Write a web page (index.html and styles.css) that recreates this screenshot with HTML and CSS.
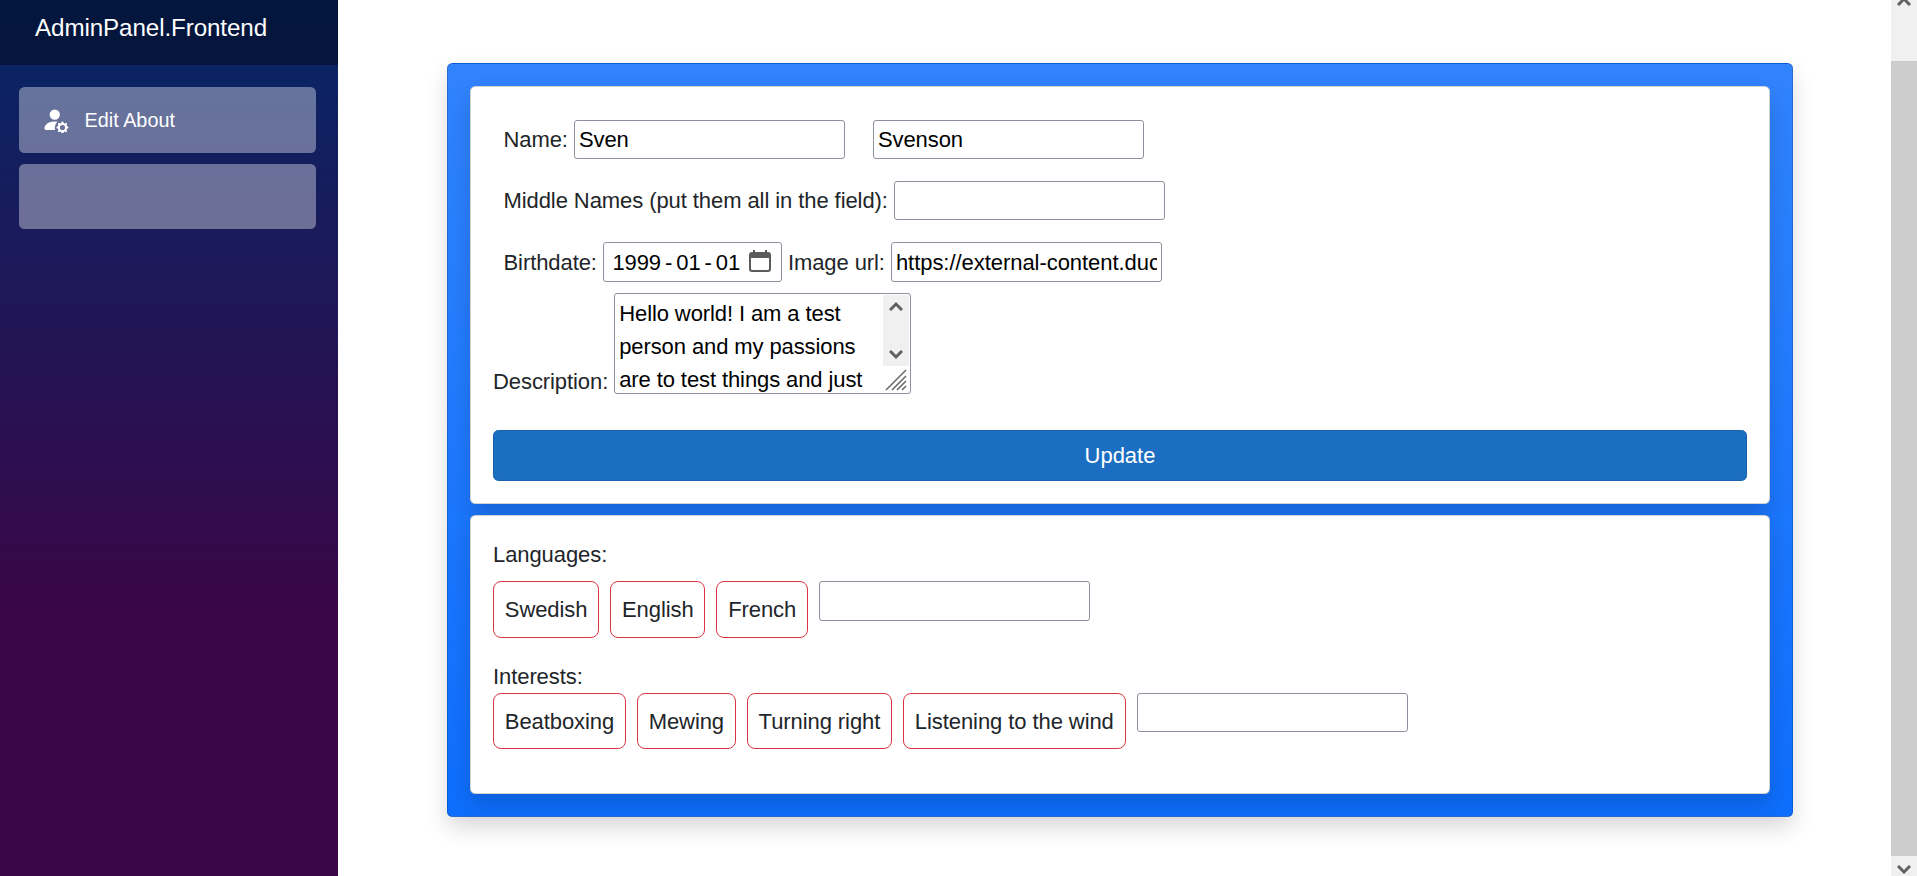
FILE: index.html
```html
<!DOCTYPE html>
<html lang="en">
<head>
<meta charset="utf-8">
<title>AdminPanel.Frontend</title>
<link rel="stylesheet" href="styles.css">
</head>
<body>
<div class="page">
  <aside class="sidebar">
    <header class="brand">AdminPanel.Frontend</header>
    <nav class="nav">
      <a class="nav-item">
        <svg class="nav-icon" viewBox="0 0 16 16" fill="#fff"><path d="M11 5a3 3 0 1 1-6 0 3 3 0 0 1 6 0m-9 8c0 1 1 1 1 1h5.256A4.500 4.500 0 0 1 8 12.500a4.500 4.500 0 0 1 1.544-3.393Q8.844 9.002 8 9c-5 0-6 3-6 4m9.886-3.540c.180-.613 1.048-.613 1.229 0l.043.148a.640.640 0 0 0 .921.382l.136-.074c.561-.306 1.175.308.870.869l-.075.136a.640.640 0 0 0 .382.920l.149.045c.612.180.612 1.048 0 1.229l-.150.043a.640.640 0 0 0-.380.921l.074.136c.305.561-.309 1.175-.870.870l-.136-.075a.640.640 0 0 0-.920.382l-.045.149c-.180.612-1.048.612-1.229 0l-.043-.150a.640.640 0 0 0-.921-.380l-.136.074c-.561.305-1.175-.309-.870-.870l.075-.136a.640.640 0 0 0-.382-.920l-.148-.045c-.613-.180-.613-1.048 0-1.229l.148-.043a.640.640 0 0 0 .382-.921l-.074-.136c-.306-.561.308-1.175.869-.870l.136.075a.640.640 0 0 0 .920-.382zM14 12.500a1.500 1.500 0 1 0-3 0 1.500 1.500 0 0 0 3 0"/></svg>
        <span>Edit About</span>
      </a>
      <a class="nav-item nav-item-empty"></a>
    </nav>
  </aside>
  <main class="content">
    <section class="panel">
      <form class="card form-card">
        <div class="row"><label>Name:</label><input class="field" value="Sven"><input class="field field-last" value="Svenson"></div>
        <div class="row row-middle"><label>Middle Names (put them all in the field):</label><input class="field"></div>
        <div class="row row-birth">
          <label>Birthdate:</label>
          <div class="field field-tall date"><span>1999</span><span>-</span><span>01</span><span>-</span><span>01</span>
            <svg class="calendar" viewBox="0 0 22 22"><path d="M4 0h2v2h10V0h2v2h1a3 3 0 0 1 3 3v14a3 3 0 0 1-3 3H3a3 3 0 0 1-3-3V5a3 3 0 0 1 3-3h1zM2 8v10.500A1.500 1.500 0 0 0 3.500 20h15a1.500 1.500 0 0 0 1.500-1.500V8z" fill="#5b5b5e" fill-rule="evenodd"/></svg>
          </div>
          <label>Image url:</label><input class="field field-tall field-url" value="https://external-content.duckduckgo.com/">
        </div>
        <div class="row row-description">
          <label>Description:</label>
          <div class="textarea">
            <div class="textarea-text">Hello world! I am a test<br>person and my passions<br>are to test things and just</div>
            <div class="textarea-side">
              <div class="mini-scroll">
                <svg class="arrow" viewBox="0 0 14 10"><path d="M1 9L7 3l6 6" /></svg>
                <svg class="arrow" viewBox="0 0 14 10"><path d="M1 1l6 6 6-6" /></svg>
              </div>
              <svg class="grip" viewBox="0 0 22 22"><path d="M1 21L21 1M7 21L21 7M12 21l9-9M17 21l4-4"/></svg>
            </div>
          </div>
        </div>
        <button class="update" type="button">Update</button>
      </form>
      <div class="card tags-card">
        <div class="tag-label">Languages:</div>
        <div class="tags languages"><span class="tag">Swedish</span><span class="tag">English</span><span class="tag">French</span><input class="field field-tall"></div>
        <div class="tag-label interests-label">Interests:</div>
        <div class="tags interests"><span class="tag">Beatboxing</span><span class="tag">Mewing</span><span class="tag">Turning right</span><span class="tag">Listening to the wind</span><input class="field"></div>
      </div>
    </section>
  </main>
  <div class="scrollbar">
    <div class="scroll-top"><svg class="arrow" viewBox="0 0 14 10"><path d="M1 9L7 3l6 6"/></svg></div>
    <div class="thumb"></div>
    <div class="scroll-bottom"><svg class="arrow" viewBox="0 0 14 10"><path d="M1 1l6 6 6-6"/></svg></div>
  </div>
</div>
</body>
</html>
```

FILE: styles.css
```css
* { box-sizing: border-box; }
body {
  margin: 0;
  overflow: hidden;
  background: #fff;
  color: #212529;
  font: 22px/33px "Liberation Sans", Arial, sans-serif;
  letter-spacing: -.08px;
}
.page { display: flex; height: 876px; }
.sidebar {
  width: 338px;
  flex: none;
  background: linear-gradient(180deg, rgb(5, 39, 103) 0%, #3a0647 70%);
}
.brand {
  height: 65px;
  padding: 11px 0 0 35px;
  background: rgba(0, 0, 0, .4);
  color: #fff;
  font-size: 24.2px;
  letter-spacing: -.1px;
}
.nav { display: flex; flex-direction: column; gap: 11px; padding: 22px 22px 0 19px; }
.nav-item {
  display: flex;
  align-items: center;
  height: 66px;
  padding-left: 22px;
  border-radius: 5.5px;
  background: rgba(255, 255, 255, .37);
  color: #fff;
  font-size: 19.8px;
  letter-spacing: .03px;
}
.nav-item-empty { height: 65px; }
.nav-icon { width: 27.5px; height: 27.5px; margin: -1px 16px 0 0; }
.content { flex: 1; padding: 63px 98px 0 109px; }
.panel, .card {
  border: 1px solid rgba(0, 0, 0, .175);
  border-radius: 5.5px;
  box-shadow: 0 11px 22px rgba(0, 0, 0, .15);
}
.panel {
  height: 754px;
  padding: 22px;
  background: #0d6efd linear-gradient(180deg, rgba(255, 255, 255, .15), rgba(255, 255, 255, 0));
}
.card { background: #fff; padding: 0 22px; }
.form-card { height: 418px; padding-top: 33px; }
.tags-card { height: 279px; margin-top: 11px; padding-top: 22px; }
.row { display: flex; align-items: center; gap: 6px; padding-left: 10.5px; white-space: nowrap; }
.row-middle { margin-top: 22px; }
.row-birth { margin-top: 22px; }
.field {
  width: 271px;
  height: 39px;
  padding: 0 4px;
  border: 1px solid #8f8f9d;
  border-radius: 3px;
  background: #fff;
  color: #000;
  font: inherit;
  letter-spacing: inherit;
}
.field-tall { height: 40px; }
.field-url { padding-top: 1px; letter-spacing: -.05px; }
.field-last { margin-left: 22px; }
.date { display: flex; align-items: center; width: 179px; padding-left: 8.5px; gap: 4px; }
.calendar { width: 22px; height: 22px; margin: -2px 0 0 4.5px; }
.row-description { margin-top: 11px; padding-left: 0; align-items: flex-end; }
.row-description label { margin-bottom: -4px; }
.textarea {
  display: flex;
  justify-content: space-between;
  width: 297px;
  height: 101px;
  padding: 1px;
  border: 1px solid #8f8f9d;
  border-radius: 3px;
  overflow: hidden;
  color: #000;
}
.textarea-text { padding: 2px 0 0 3px; letter-spacing: -.1px; }
.textarea-side { width: 26px; }
.mini-scroll {
  display: flex;
  flex-direction: column;
  align-items: center;
  justify-content: space-between;
  height: 71px;
  padding: 6px 0;
  background: #f0f0f0;
}
.arrow { display: block; width: 14px; height: 10px; fill: none; stroke: #606060; stroke-width: 3; }
.grip { display: block; width: 22px; height: 22px; margin: 3px 0 0 2px; fill: none; stroke: #666; stroke-width: 1.5; }
.update {
  display: block;
  width: 100%;
  height: 51px;
  margin-top: 36px;
  border: 1px solid #1861ac;
  border-radius: 5.5px;
  background: #1b6ec2;
  color: #fff;
  font: inherit;
}
.tag-label { height: 33px; }
.tags { display: flex; align-items: flex-start; gap: 11px; }
.languages { margin-top: 10px; }
.interests-label { margin-top: 22px; }
.tag { height: 57px; padding: 11px 10.8px; border: 1px solid #dc3545; border-radius: 8px; white-space: nowrap; }
.interests .tag { height: 56px; }
.scrollbar { display: flex; flex-direction: column; width: 26px; background: #f0f0f0; }
.scroll-top { height: 61px; }
.scroll-top .arrow { margin: -4px 0 0 6px; }
.thumb { flex: 1; background: #cdcdcd; }
.scroll-bottom { height: 20px; padding: 9px 0 0 6px; }
```
